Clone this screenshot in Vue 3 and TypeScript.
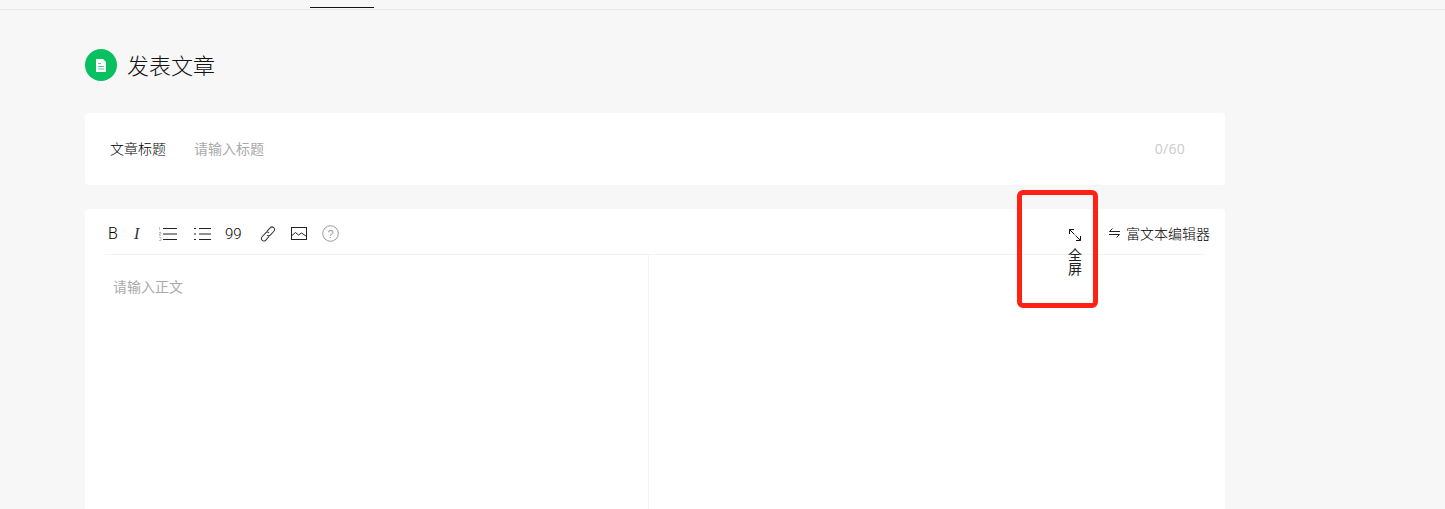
<template>
  <div class="page">
    <header class="topbar">
      <span class="tab-active"></span>
    </header>

    <main class="content">
      <div class="page-title">
        <span class="title-icon">
          <svg width="10" height="13" viewBox="0 0 10 13">
            <path d="M0 0h7l3 3v10H0z" fill="#fff" />
            <path d="M2 4.500h3M2 7.500h6M2 10h6" stroke="#07c160" stroke-width="1" fill="none" opacity="0.7" />
          </svg>
        </span>
        <h1>发表文章</h1>
      </div>

      <section class="card title-card">
        <label class="field-label">文章标题</label>
        <span class="placeholder">请输入标题</span>
        <span class="counter">0/60</span>
      </section>

      <section class="card editor-card">
        <div class="toolbar">
          <div class="tools">
            <span class="tool tool-b">B</span>
            <span class="tool tool-i">I</span>
            <svg class="tool-svg tool-ol" width="18" height="14" viewBox="0 0 18 14">
              <path d="M4 1.500h14M4 7h14M4 12.500h14" stroke="#222" fill="none" />
              <path d="M.5 0v3M0 5.500h2v1.500H0v1.500h2M0 10.500h2v3H0" stroke="#999" stroke-width="0.6" fill="none" />
            </svg>
            <svg class="tool-svg tool-ul" width="17" height="14" viewBox="0 0 17 14">
              <path d="M5 1.500h12M5 7h12M5 12.500h12" stroke="#222" fill="none" />
              <path d="M0 1.500h2M0 7h2M0 12.500h2" stroke="#222" fill="none" />
            </svg>
            <span class="tool tool-q">99</span>
            <svg class="tool-svg" width="16" height="16" viewBox="0 0 16 16">
              <g transform="rotate(-48 8 8)" fill="none" stroke="#333">
                <path d="M9 5.500h5a2.500 2.500 0 0 1 0 5H9A2.500 2.500 0 0 1 6.500 8" />
                <path d="M7 10.500H2a2.500 2.500 0 0 1 0-5h5A2.500 2.500 0 0 1 9.500 8" />
              </g>
            </svg>
            <svg class="tool-svg" width="16" height="13" viewBox="0 0 16 13">
              <rect x="0.500" y="0.500" width="15" height="12" fill="none" stroke="#222" />
              <path d="M1 8.500l3.500-3 3 2.500 3-2 4.500 3" stroke="#222" fill="none" />
            </svg>
            <svg class="tool-svg" width="17" height="17" viewBox="0 0 17 17">
              <circle cx="8.500" cy="8.500" r="7.800" fill="none" stroke="#999" />
              <text x="8.500" y="12.500" text-anchor="middle" font-size="11" fill="#999" font-family="Liberation Sans, sans-serif">?</text>
            </svg>
          </div>
          <div class="actions">
            <div class="fullscreen">
              <svg width="14" height="14" viewBox="0 0 14 14">
                <path d="M1.500 6V1.500H6M1.500 1.500l5 5M12.500 8v4.500H8M12.500 12.500l-5-5" stroke="#111" fill="none" />
              </svg>
              <span class="fs-text">全屏</span>
            </div>
            <div class="switch">
              <svg width="11" height="10" viewBox="0 0 11 10">
                <path d="M3.500.5L.5 3.500H11M0 6.500h10.500l-3 3" stroke="#222" fill="none" />
              </svg>
              <span>富文本编辑器</span>
            </div>
          </div>
        </div>

        <div class="panes">
          <div class="pane-left">请输入正文</div>
          <div class="pane-right"></div>
        </div>

        <div class="highlight"></div>
      </section>
    </main>
  </div>
</template>

<script setup lang="ts">
</script>

<style>
html,
body {
  margin: 0;
  background: #f7f7f7;
  overflow: hidden;
}
</style>

<style scoped>
.page {
  height: 509px;
  overflow: hidden;
  background: #f7f7f7;
  font-family: "Noto Sans CJK SC", "Liberation Sans", sans-serif;
  color: #222;
}

.topbar {
  height: 9px;
  border-bottom: 1px solid #e7e7e7;
  padding-left: 310px;
}

.tab-active {
  display: block;
  width: 64px;
  height: 1px;
  transform: translateY(7px);
  background: #111;
}

.content {
  width: 1140px;
  margin-left: 85px;
  padding-top: 39px;
}

.page-title {
  display: flex;
  align-items: center;
  gap: 10px;
  height: 32px;
  margin-bottom: 32px;
}

.title-icon {
  width: 32px;
  height: 32px;
  border-radius: 50%;
  background: #07c160;
  display: flex;
  align-items: center;
  justify-content: center;
}

.page-title h1 {
  margin: 0 0 3px;
  font-size: 22px;
  font-weight: 300;
  color: #111;
}

.card {
  background: #fff;
  border-radius: 4px;
}

.title-card {
  height: 72px;
  box-sizing: border-box;
  display: flex;
  align-items: center;
  padding: 0 40px 2px 25px;
  margin-bottom: 24px;
  font-size: 14px;
}

.field-label {
  width: 69px;
  margin-right: 15px;
  white-space: nowrap;
  font-weight: 300;
  color: #000;
}

.placeholder {
  flex: 1;
  color: #aaa;
}

.counter {
  color: #ccc;
  font-size: 14px;
  letter-spacing: 0.3px;
  font-family: "Open Sans", "Liberation Sans", sans-serif;
}

.editor-card {
  position: relative;
  height: 340px;
}

.toolbar {
  height: 45px;
  margin: 0 20px;
  border-bottom: 1px solid #f3f3f3;
  display: flex;
  justify-content: space-between;
  align-items: flex-start;
}

.tools {
  display: flex;
  align-items: center;
  height: 17px;
  margin-top: 16px;
  margin-left: 2px;
}

.tool {
  font-family: Roboto, "Liberation Sans", sans-serif;
  font-weight: 300;
  font-size: 16px;
  color: #000;
  line-height: 17px;
}

.tool-b {
  width: 26px;
  margin-left: 1px;
}

.tool-i {
  width: 25px;
  font-family: "Liberation Serif", serif;
  font-style: italic;
  font-weight: 400;
  color: #333;
}

.tool-q {
  width: 35px;
  font-size: 15px;
  padding-top: 1px;
}

.tool-svg {
  flex: none;
  margin-right: 15px;
}

.tool-ol {
  margin-right: 17px;
}

.tool-ul {
  margin-right: 14px;
}

.actions {
  display: flex;
  align-items: flex-start;
  margin-right: -5px;
  font-size: 14px;
}

.fullscreen {
  width: 14px;
  display: flex;
  flex-direction: column;
  align-items: center;
  margin-top: 19px;
  margin-right: 27px;
}

.fs-text {
  width: 14px;
  margin-top: 5px;
  font-size: 14px;
  line-height: 14px;
  color: #222;
  word-break: break-all;
}

.switch {
  display: flex;
  align-items: center;
  gap: 6px;
  height: 17px;
  margin-top: 15px;
  white-space: nowrap;
  font-weight: 300;
  color: #000;
}

.panes {
  display: flex;
  height: 295px;
}

.pane-left {
  width: 564px;
  box-sizing: border-box;
  padding: 21px 0 0 28px;
  border-right: 1px solid #f3f3f3;
  font-size: 14px;
  line-height: 20px;
  color: #aaa;
}

.pane-right {
  flex: 1;
}

.highlight {
  position: absolute;
  left: 932px;
  top: -19px;
  width: 81px;
  height: 118px;
  box-sizing: border-box;
  border: 5px solid #ff2114;
  border-radius: 6px;
  pointer-events: none;
}
</style>
